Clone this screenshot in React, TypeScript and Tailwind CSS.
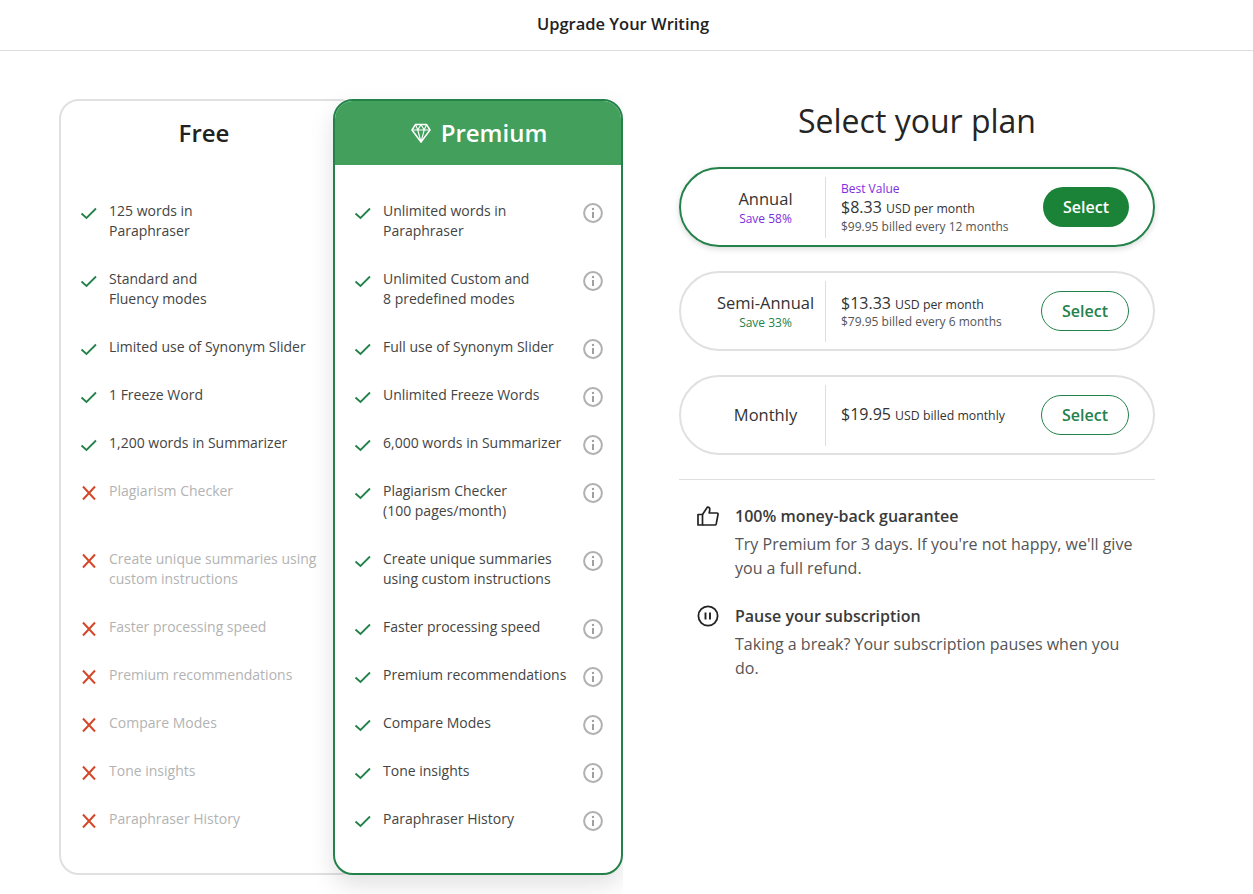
const freeRows = [
  { ok: true, lines: ["125 words in", "Paraphraser"] },
  { ok: true, lines: ["Standard and", "Fluency modes"] },
  { ok: true, lines: ["Limited use of Synonym Slider"] },
  { ok: true, lines: ["1 Freeze Word"] },
  { ok: true, lines: ["1,200 words in Summarizer"] },
  { ok: false, lines: ["Plagiarism Checker", "\u00a0"] },
  { ok: false, lines: ["Create unique summaries using", "custom instructions"] },
  { ok: false, lines: ["Faster processing speed"] },
  { ok: false, lines: ["Premium recommendations"] },
  { ok: false, lines: ["Compare Modes"] },
  { ok: false, lines: ["Tone insights"] },
  { ok: false, lines: ["Paraphraser History"] },
];

const premiumRows = [
  ["Unlimited words in", "Paraphraser"],
  ["Unlimited Custom and", "8 predefined modes"],
  ["Full use of Synonym Slider"],
  ["Unlimited Freeze Words"],
  ["6,000 words in Summarizer"],
  ["Plagiarism Checker", "(100 pages/month)"],
  ["Create unique summaries", "using custom instructions"],
  ["Faster processing speed"],
  ["Premium recommendations"],
  ["Compare Modes"],
  ["Tone insights"],
  ["Paraphraser History"],
];

function Check() {
  return (
    <svg width="18" height="18" viewBox="0 0 18 18" fill="none" className="shrink-0 mt-[3px] -mb-[1px]">
      <path d="M1.5 9.5L6.5 14L16 4.5" stroke="#23824a" strokeWidth="1.8" />
    </svg>
  );
}

function Cross() {
  return (
    <svg width="18" height="18" viewBox="0 0 18 18" fill="none" className="shrink-0 mt-[3px] -mb-[1px]">
      <path d="M3 2.5L15 15.5M15 2.5L3 15.5" stroke="#d4482b" strokeWidth="2" />
    </svg>
  );
}

function Info() {
  return (
    <svg width="20" height="20" viewBox="0 0 20 20" fill="none" className="shrink-0 mt-[2px] -mb-[2px]">
      <circle cx="10" cy="10" r="8.9" stroke="#b0b0b0" strokeWidth="2" />
      <circle cx="10" cy="6" r="1.2" fill="#a0a0a0" />
      <path d="M10 9V15" stroke="#a0a0a0" strokeWidth="2" />
    </svg>
  );
}

function Diamond() {
  return (
    <svg width="20" height="20" viewBox="0 0 20 20" fill="none" stroke="white" strokeWidth="1.5" strokeLinejoin="round">
      <path d="M4.5 1.5H15.5L19 7L10 19L1 7Z" />
      <path d="M1 7H19M4.5 1.5L6.8 7L10 19L13.2 7L15.5 1.5M6.8 7L10 1.5L13.2 7" strokeWidth="1.1" />
    </svg>
  );
}

function ThumbUp() {
  return (
    <svg width="22" height="22" viewBox="0 0 22 22" fill="none" stroke="#222" strokeWidth="1.7" strokeLinejoin="round">
      <path d="M1 9.5H5.5V20H1Z" />
      <path d="M5.5 9.5L10.5 2C12.5 2 13 3.5 12.7 5.2L12.2 8H20C20.8 8 21.2 8.8 21 9.6L19.2 19C19 19.6 18.6 20 18 20H5.5" />
    </svg>
  );
}

function PauseIcon() {
  return (
    <svg width="22" height="22" viewBox="0 0 22 22" fill="none" stroke="#222">
      <circle cx="11" cy="11" r="9.6" strokeWidth="1.8" />
      <path d="M8.5 7.5V14.5M13 7.5V14.5" strokeWidth="1.9" />
    </svg>
  );
}

function SelectButton({ solid }: { solid?: boolean }) {
  return solid ? (
    <button className="w-[86px] h-[40px] rounded-full bg-[#1a8337] text-white text-[16px] font-semibold">Select</button>
  ) : (
    <button className="w-[88px] h-[40px] rounded-full border border-[#23824a] bg-white text-[#23824a] text-[16px] font-semibold">Select</button>
  );
}

export default function App() {
  return (
    <div className="h-[894px] overflow-hidden bg-white text-[#252525] font-['Open_Sans',sans-serif]">
      <div className="h-[51px] border-b border-[#dedede] flex items-center justify-center pb-[2px]">
        <h1 className="text-[16.5px] font-semibold text-[#222] ml-[-7px]">Upgrade Your Writing</h1>
      </div>

      <div className="flex pl-[59px] pt-[48px]">
        {/* Plans comparison */}
        <div className="flex items-start w-[564px] overflow-x-clip">
          <div className="w-[300px] shrink-0 h-[776px] rounded-[20px] border-2 border-[#e0e0e0] bg-white">
            <div className="h-[64px] flex items-center justify-center pr-[10px]">
              <h2 className="text-[24px] font-semibold text-[#222]">Free</h2>
            </div>
            <ul className="mt-[36px] pl-[19px] flex flex-col gap-[28px]">
              {freeRows.map((row, i) => (
                <li key={i} className="flex gap-[11px]">
                  {row.ok ? <Check /> : <Cross />}
                  <div className={`text-[14px] leading-[20px] ${row.ok ? "text-[#444]" : "text-[#b3b3b3]"}`}>
                    {row.lines.map((l, j) => (
                      <div key={j}>{l}</div>
                    ))}
                  </div>
                </li>
              ))}
            </ul>
          </div>

          <div className="relative z-10 ml-[-26px] w-[290px] shrink-0 h-[776px] rounded-[20px] border-2 border-[#23824a] bg-white shadow-[0_10px_24px_rgba(0,0,0,0.12)] overflow-hidden">
            <div className="h-[64px] bg-[#42a05c] flex items-center justify-center gap-[10px] pl-[2px] text-white">
              <Diamond />
              <h2 className="text-[24px] font-semibold">Premium</h2>
            </div>
            <ul className="mt-[36px] pl-[19px] pr-[18px] flex flex-col gap-[28px]">
              {premiumRows.map((lines, i) => (
                <li key={i} className="flex gap-[11px]">
                  <Check />
                  <div className="flex-1 text-[14px] leading-[20px] text-[#444]">
                    {lines.map((l, j) => (
                      <div key={j}>{l}</div>
                    ))}
                  </div>
                  <Info />
                </li>
              ))}
            </ul>
          </div>
        </div>

        {/* Pricing */}
        <div className="ml-[56px] w-[476px]">
          <h2 className="text-[32px] leading-[44px] text-center text-[#252525]">Select your plan</h2>

          <div className="mt-[24px] flex flex-col gap-[24px]">
            <div className="h-[80px] rounded-full border-2 border-[#23824a] shadow-[0_2px_6px_rgba(0,0,0,0.15)] flex items-center pr-[24px]">
              <div className="w-[144px] shrink-0 pl-[25px] text-center">
                <div className="text-[16.5px] leading-[22px] font-medium text-[#333]">Annual</div>
                <div className="text-[12px] leading-[16px] mt-[1px] text-[#7c2ee0]">Save 58%</div>
              </div>
              <div className="h-[61px] border-l border-[#dedede] pl-[15px] flex-1">
                <div className="text-[12px] leading-[16px] text-[#7c2ee0] mt-[4px]">Best Value</div>
                <div className="text-[16px] leading-[20px] font-medium text-[#333]">
                  $8.33 <span className="text-[12.3px]">USD per month</span>
                </div>
                <div className="text-[12px] leading-[15px] text-[#555]">$99.95 billed every 12 months</div>
              </div>
              <SelectButton solid />
            </div>

            <div className="h-[80px] rounded-full border-2 border-[#e0e0e0] flex items-center pr-[24px]">
              <div className="w-[144px] shrink-0 pl-[25px] text-center whitespace-nowrap">
                <div className="text-[16.5px] leading-[22px] font-medium text-[#333]">Semi-Annual</div>
                <div className="text-[12px] leading-[16px] mt-[1px] text-[#23824a]">Save 33%</div>
              </div>
              <div className="h-[61px] border-l border-[#dedede] pl-[15px] flex-1 flex flex-col justify-center">
                <div className="text-[16px] leading-[20px] font-medium text-[#333]">
                  $13.33 <span className="text-[12.3px]">USD per month</span>
                </div>
                <div className="text-[12px] leading-[15px] text-[#555] -mt-[1px]">$79.95 billed every 6 months</div>
              </div>
              <SelectButton />
            </div>

            <div className="h-[80px] rounded-full border-2 border-[#e0e0e0] flex items-center pr-[24px]">
              <div className="w-[144px] shrink-0 pl-[25px] text-center">
                <div className="text-[16.5px] leading-[22px] font-medium text-[#333]">Monthly</div>
              </div>
              <div className="h-[61px] border-l border-[#dedede] pl-[15px] flex-1 flex items-center">
                <div className="text-[16px] leading-[20px] font-medium text-[#333]">
                  $19.95 <span className="text-[12.3px]">USD billed monthly</span>
                </div>
              </div>
              <SelectButton />
            </div>
          </div>

          <div className="mt-[24px] border-t border-[#dedede] pt-[24px] pl-[18px] pr-[14px]">
            <div className="flex gap-[16px]">
              <div className="w-[22px] shrink-0 mt-[1px]"><ThumbUp /></div>
              <div>
                <h3 className="text-[16px] leading-[24px] font-semibold text-[#3a3a3a]">100% money-back guarantee</h3>
                <p className="mt-[4px] text-[16px] leading-[24px] text-[#555]">Try Premium for 3 days. If you're not happy, we'll give you a full refund.</p>
              </div>
            </div>
            <div className="flex gap-[16px] mt-[24px]">
              <div className="w-[22px] shrink-0 mt-[1px]"><PauseIcon /></div>
              <div>
                <h3 className="text-[16px] leading-[24px] font-semibold text-[#3a3a3a]">Pause your subscription</h3>
                <p className="mt-[4px] pr-[16px] text-[16px] leading-[24px] text-[#555]">Taking a break? Your subscription pauses when you do.</p>
              </div>
            </div>
          </div>
        </div>
      </div>
    </div>
  );
}
